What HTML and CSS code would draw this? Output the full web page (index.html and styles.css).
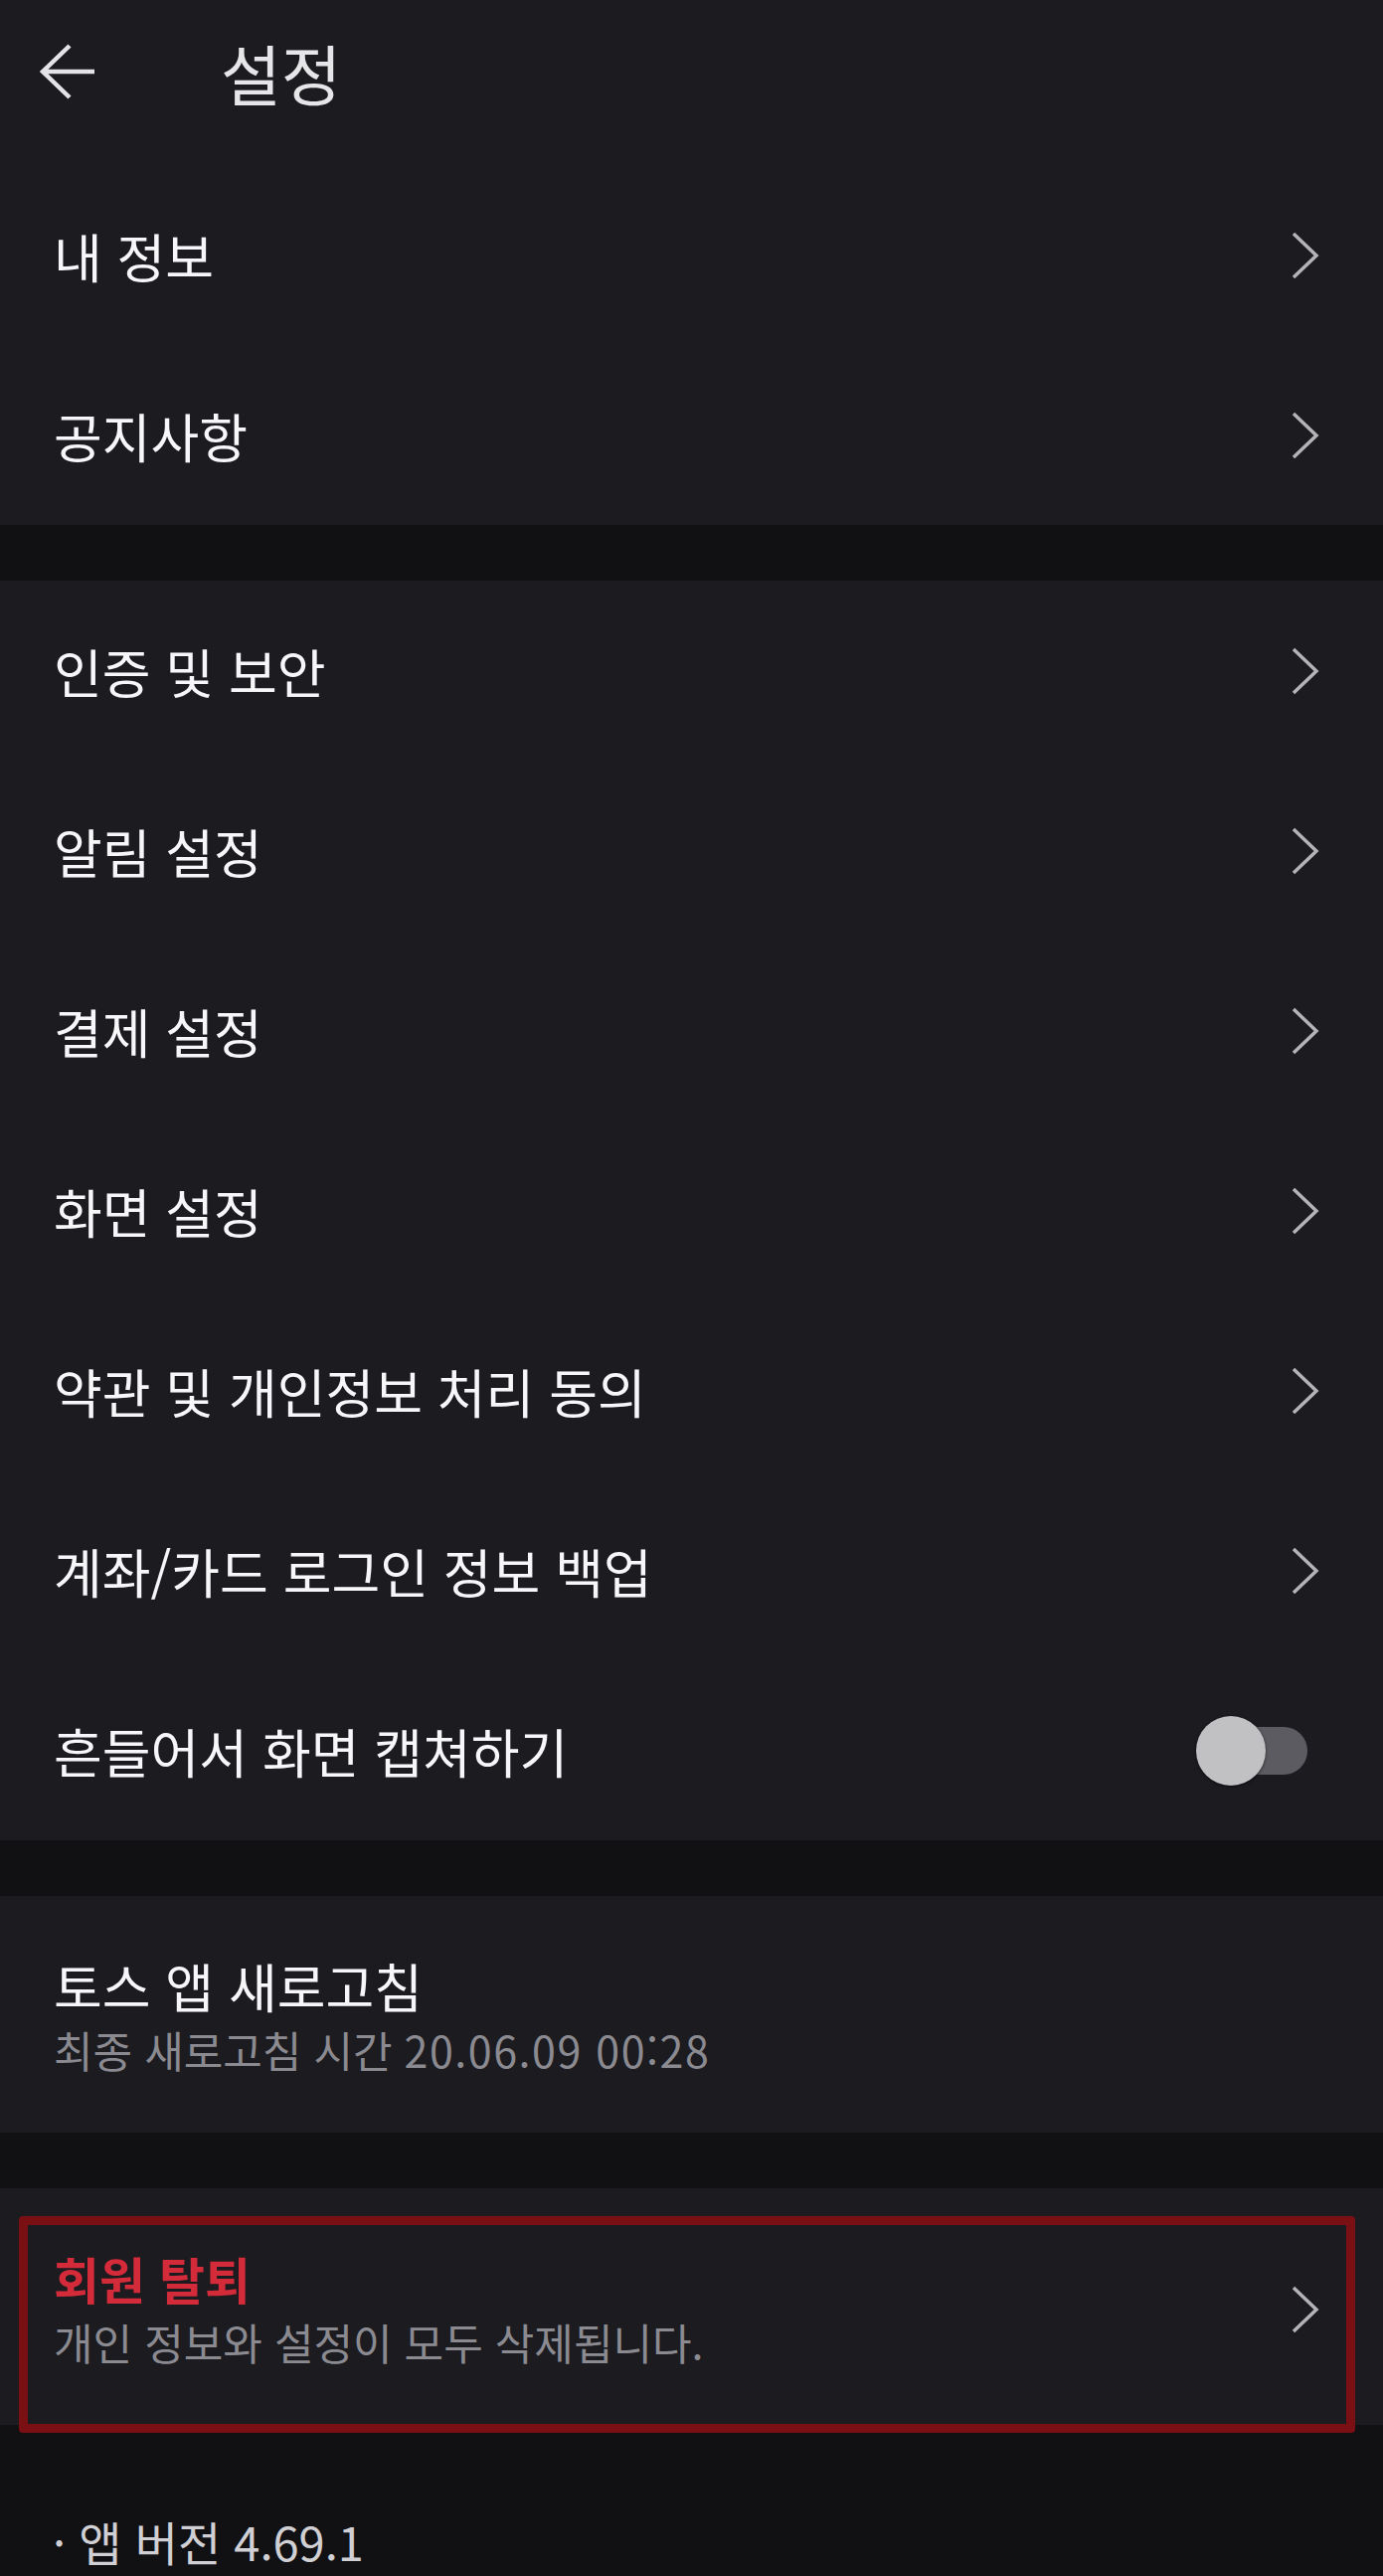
FILE: index.html
```html
<!DOCTYPE html>
<html lang="ko">
<head>
    <meta charset="UTF-8">
    <meta name="viewport" content="width=device-width, initial-scale=1.0">
    <title>설정</title>
    <link rel="stylesheet" href="styles.css">
</head>
<body>
    <header class="top-bar">
        <svg class="back-icon" viewBox="0 0 56 56" width="56" height="56">
            <path d="M55 28 H3 M30 2 L3 28 L30 54" fill="none" stroke="#e4e4e6" stroke-width="4.5"/>
        </svg>
        <h1 class="page-title">설정</h1>
    </header>

    <section class="group first">
        <div class="row">
            <span class="label">내 정보</span>
            <svg class="chevron" viewBox="0 0 28 48" width="28" height="48"><path d="M2 2 L25 24 L2 46" fill="none" stroke="#b4b4b8" stroke-width="3.5"/></svg>
        </div>
        <div class="row">
            <span class="label">공지사항</span>
            <svg class="chevron" viewBox="0 0 28 48" width="28" height="48"><path d="M2 2 L25 24 L2 46" fill="none" stroke="#b4b4b8" stroke-width="3.5"/></svg>
        </div>
    </section>

    <section class="group">
        <div class="row">
            <span class="label">인증 및 보안</span>
            <svg class="chevron" viewBox="0 0 28 48" width="28" height="48"><path d="M2 2 L25 24 L2 46" fill="none" stroke="#b4b4b8" stroke-width="3.5"/></svg>
        </div>
        <div class="row">
            <span class="label">알림 설정</span>
            <svg class="chevron" viewBox="0 0 28 48" width="28" height="48"><path d="M2 2 L25 24 L2 46" fill="none" stroke="#b4b4b8" stroke-width="3.5"/></svg>
        </div>
        <div class="row">
            <span class="label">결제 설정</span>
            <svg class="chevron" viewBox="0 0 28 48" width="28" height="48"><path d="M2 2 L25 24 L2 46" fill="none" stroke="#b4b4b8" stroke-width="3.5"/></svg>
        </div>
        <div class="row">
            <span class="label">화면 설정</span>
            <svg class="chevron" viewBox="0 0 28 48" width="28" height="48"><path d="M2 2 L25 24 L2 46" fill="none" stroke="#b4b4b8" stroke-width="3.5"/></svg>
        </div>
        <div class="row">
            <span class="label">약관 및 개인정보 처리 동의</span>
            <svg class="chevron" viewBox="0 0 28 48" width="28" height="48"><path d="M2 2 L25 24 L2 46" fill="none" stroke="#b4b4b8" stroke-width="3.5"/></svg>
        </div>
        <div class="row">
            <span class="label">계좌/카드 로그인 정보 백업</span>
            <svg class="chevron" viewBox="0 0 28 48" width="28" height="48"><path d="M2 2 L25 24 L2 46" fill="none" stroke="#b4b4b8" stroke-width="3.5"/></svg>
        </div>
        <div class="row">
            <span class="label">흔들어서 화면 캡쳐하기</span>
            <div class="switch">
                <span class="switch-track"></span>
                <span class="switch-knob"></span>
            </div>
        </div>
    </section>

    <section class="group">
        <div class="row tall">
            <div class="text-block">
                <div class="label">토스 앱 새로고침</div>
                <div class="sub">최종 새로고침 시간 <span class="stamp">20.06.09 00:28</span></div>
            </div>
        </div>
    </section>

    <section class="group marked">
        <div class="row tall">
            <div class="text-block">
                <div class="label danger">회원 탈퇴</div>
                <div class="sub">개인 정보와 설정이 모두 삭제됩니다.</div>
            </div>
            <svg class="chevron" viewBox="0 0 28 48" width="28" height="48"><path d="M2 2 L25 24 L2 46" fill="none" stroke="#b4b4b8" stroke-width="3.5"/></svg>
        </div>
        <div class="highlight"></div>
    </section>

    <p class="version">· 앱 버전 4.69.1</p>
</body>
</html>
```

FILE: styles.css
```css
body {
    margin: 0;
    padding: 0;
    background: #111114;
    font-family: "Noto Sans CJK KR", "Noto Sans", sans-serif;
    color: #f5f5f7;
}

.top-bar {
    display: flex;
    align-items: center;
    height: 166px;
    padding: 0 0 22px 40px;
    box-sizing: border-box;
    background: #1b1b20;
}

.back-icon {
    display: block;
}

.page-title {
    margin: 0 0 0 126px;
    font-size: 66px;
    font-weight: 400;
    line-height: 72px;
    color: #e6e6e8;
}

.group {
    background: #1b1b20;
    margin-top: 56px;
}

.group.first {
    margin-top: 0;
}

.row {
    display: flex;
    align-items: center;
    justify-content: space-between;
    height: 181px;
    padding: 0 64px 0 54px;
}

.row.tall {
    height: 238px;
    box-sizing: border-box;
    padding-top: 6px;
}

.label {
    font-size: 53px;
    line-height: 64px;
    color: #f7f7f9;
}

.label.danger {
    font-size: 50px;
    color: #d42b3b;
    font-weight: 700;
}

.sub {
    font-size: 43px;
    line-height: 64px;
    color: #8a8a90;
}

.stamp {
    letter-spacing: 1.5px;
}

.chevron {
    display: block;
}

.switch {
    position: relative;
    width: 112px;
    height: 70px;
    margin-right: 12px;
}

.switch-track {
    position: absolute;
    right: 0;
    top: 11px;
    width: 92px;
    height: 48px;
    border-radius: 24px;
    background: #5b5b61;
}

.switch-knob {
    position: absolute;
    left: 0;
    top: 0;
    width: 70px;
    height: 70px;
    border-radius: 50%;
    background: #c1c1c4;
    box-shadow: 0 1px 3px rgba(0, 0, 0, 0.6);
}

.marked {
    position: relative;
}

.highlight {
    position: absolute;
    top: 28px;
    left: 19px;
    right: 28px;
    bottom: -8px;
    border: 9px solid #7a0f14;
    border-radius: 4px;
    pointer-events: none;
}

.version {
    margin: 0;
    padding-top: 92px;
    font-size: 47px;
    line-height: 50px;
    padding-left: 53px;
    color: #d0d0d4;
}
```
